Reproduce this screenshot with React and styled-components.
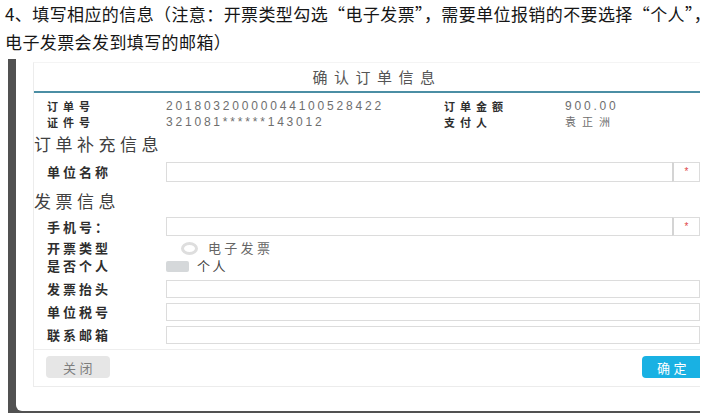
import React from "react";
import styled, { createGlobalStyle } from "styled-components";

const GlobalStyle = createGlobalStyle`
  html, body { margin: 0; padding: 0; background: #fff; }
  body { font-family: "Liberation Sans", "Noto Sans CJK SC", sans-serif; }
  * { box-sizing: border-box; }
`;

const Page = styled.div`
  width: 722px;
  height: 417px;
  overflow: hidden;
  background: #fff;
`;

const Caption = styled.div`
  padding-left: 5px;
  font-family: "Noto Sans CJK SC", sans-serif;
  font-size: 17px;
  line-height: 28px;
  letter-spacing: 0.4px;
  color: #161616;
  white-space: nowrap;
`;

const Frame = styled.div`
  margin: 3px 0 0 8px;
  width: 692px;
  height: 354px;
  background: #515151;
  display: flex;
  padding: 0 0 2px 8px;
`;

const Panel = styled.div`
  flex: 1;
  background: #fff;
  border-bottom-left-radius: 6px;
  overflow: hidden;
  padding: 3px 0 0 17px;
`;

const ModalBox = styled.div`
  width: 677px;
  border: 1px solid #ececec;
  border-top-color: #f4f4f4;
  overflow: hidden;
`;

const Header = styled.div`
  padding: 5px 0 3px 11px;
  border-bottom: 2px solid #4b8ea4;
  text-align: center;
  font-size: 15px;
  line-height: 20px;
  letter-spacing: 6.5px;
  color: #555;
`;

const InfoGrid = styled.div`
  display: grid;
  grid-template-columns: 119px 278px 121px auto;
  grid-auto-rows: 16px;
  align-items: center;
  padding: 5px 0 0 13px;
`;

const Label = styled.div`
  font-family: "Noto Sans CJK SC", sans-serif;
  font-weight: 700;
  font-size: ${(p) => (p.$small ? "11px" : "13px")};
  line-height: 16px;
  letter-spacing: ${(p) => (p.$small ? "5px" : "3px")};
  color: #2e2e2e;
  white-space: nowrap;
`;

const Value = styled.div`
  font-family: "Liberation Sans", "Noto Sans CJK SC", sans-serif;
  font-size: ${(p) => (p.$cjk ? "11px" : "12px")};
  letter-spacing: ${(p) => (p.$cjk ? "6px" : "2.8px")};
  line-height: 16px;
  color: #6e6e6e;
  white-space: nowrap;
`;

const SectionTitle = styled.div`
  margin-top: ${(p) => p.$top}px;
  height: 22px;
  font-family: "Noto Sans CJK SC", sans-serif;
  font-size: 17px;
  line-height: 22px;
  letter-spacing: 4.5px;
  color: #404040;
`;

const FormRow = styled.div`
  margin-top: ${(p) => p.$top}px;
  height: ${(p) => p.$h}px;
  display: grid;
  grid-template-columns: 119px 1fr;
  align-items: center;
  padding: 0 9px 0 13px;
`;

const Field = styled.div`
  display: flex;
  align-items: center;
  height: 100%;
`;

const Input = styled.div`
  flex: 1;
  height: 100%;
  border: 1px solid #dcdcdc;
  background: #fff;
`;

const Addon = styled.div`
  width: 28px;
  height: 100%;
  border: 1px solid #dcdcdc;
  border-left: 2px solid #d4d4d4;
  margin-left: -1px;
  display: flex;
  align-items: center;
  justify-content: center;
  color: #e04848;
  font-size: 10px;
  line-height: 1;
`;

const Radio = styled.span`
  display: inline-block;
  margin-left: 15px;
  width: 17px;
  height: 13px;
  border: 3px solid #dedede;
  border-radius: 50%;
  background: #fff;
`;

const Toggle = styled.span`
  display: inline-block;
  width: 23px;
  height: 11px;
  border-radius: 2px;
  background: #d5d8da;
`;

const OptionText = styled.span`
  margin-left: ${(p) => p.$ml}px;
  font-family: "Noto Sans CJK SC", sans-serif;
  font-size: 13px;
  letter-spacing: ${(p) => p.$ls}px;
  color: ${(p) => p.$color || "#666"};
  line-height: 16px;
`;

const Footer = styled.div`
  margin-top: 5px;
  border-top: 1px solid #eeeeee;
  padding: 6px 1px 8px 12px;
  display: flex;
  justify-content: space-between;
`;

const Button = styled.div`
  height: 22px;
  width: ${(p) => p.$w}px;
  border-radius: 4px;
  display: flex;
  align-items: center;
  justify-content: ${(p) => (p.$primary ? "flex-start" : "center")};
  padding-left: ${(p) => (p.$primary ? "15px" : "3px")};
  background: ${(p) => (p.$primary ? "#19b1e3" : "#e6e6e6")};
  color: ${(p) => (p.$primary ? "#fff" : "#7e7e7e")};
  font-family: "Noto Sans CJK SC", sans-serif;
  font-size: 13px;
  letter-spacing: 3.5px;
`;

export default function App() {
  return (
    <Page>
      <GlobalStyle />
      <Caption>
        <div>4、填写相应的信息（注意：开票类型勾选“电子发票”，需要单位报销的不要选择“个人”，</div>
        <div>电子发票会发到填写的邮箱）</div>
      </Caption>
      <Frame>
        <Panel>
          <ModalBox>
            <Header>确认订单信息</Header>
            <InfoGrid>
              <Label $small>订单号</Label>
              <Value>20180320000044100528422</Value>
              <Label $small>订单金额</Label>
              <Value>900.00</Value>
              <Label $small>证件号</Label>
              <Value>321081******143012</Value>
              <Label $small>支付人</Label>
              <Value $cjk>袁正洲</Value>
            </InfoGrid>

            <SectionTitle $top={3}>订单补充信息</SectionTitle>
            <FormRow $top={7} $h={20}>
              <Label>单位名称</Label>
              <Field>
                <Input />
                <Addon>*</Addon>
              </Field>
            </FormRow>

            <SectionTitle $top={8}>发票信息</SectionTitle>
            <FormRow $top={5} $h={19}>
              <Label>手机号：</Label>
              <Field>
                <Input />
                <Addon>*</Addon>
              </Field>
            </FormRow>
            <FormRow $top={4} $h={16}>
              <Label>开票类型</Label>
              <Field>
                <Radio />
                <OptionText $ml={10} $ls={3.3}>电子发票</OptionText>
              </Field>
            </FormRow>
            <FormRow $top={2} $h={16}>
              <Label>是否个人</Label>
              <Field>
                <Toggle />
                <OptionText $ml={8} $ls={2.5} $color="#444">个人</OptionText>
              </Field>
            </FormRow>
            <FormRow $top={6} $h={18}>
              <Label>发票抬头</Label>
              <Field>
                <Input />
              </Field>
            </FormRow>
            <FormRow $top={5} $h={18}>
              <Label>单位税号</Label>
              <Field>
                <Input />
              </Field>
            </FormRow>
            <FormRow $top={5} $h={18}>
              <Label>联系邮箱</Label>
              <Field>
                <Input />
              </Field>
            </FormRow>

            <Footer>
              <Button $w={64}>关闭</Button>
              <Button $w={66} $primary>确定</Button>
            </Footer>
          </ModalBox>
        </Panel>
      </Frame>
    </Page>
  );
}
